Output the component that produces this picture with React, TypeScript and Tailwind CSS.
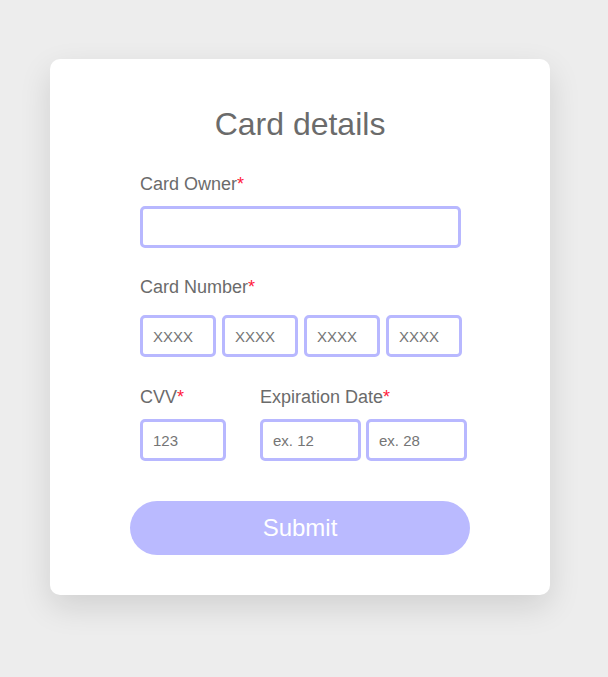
import { useState } from "react";

const inputCls =
	"h-[42px] rounded-[5px] border-[3px] border-[#b8b8ff] bg-white px-[10px] text-[15px] text-[#555] outline-none placeholder:text-[#757575]";

function Label({ text, className = "" }: { text: string; className?: string }) {
	return (
		<label className={`block text-[18px] leading-[20px] text-[#6b6b6b] ${className}`}>
			{text}
			<span className="text-[#ff1a3c]">*</span>
		</label>
	);
}

export default function App() {
	const [owner, setOwner] = useState("");

	return (
		<div
			className="min-h-[677px] w-full bg-[#ededed] pl-[50px] pt-[59px]"
			style={{ fontFamily: '"Liberation Sans", Arial, sans-serif' }}>
			<form
				onSubmit={(e) => e.preventDefault()}
				className="flex w-[500px] flex-col rounded-[10px] bg-white pb-[40px] pt-[47px] shadow-[0_12px_32px_rgba(0,0,0,0.12)]">
				<h1 className="text-center text-[32px] leading-[37px] text-[#6b6b6b]">Card details</h1>

				<div className="ml-[90px] w-[322px]">
					{/* OWNER */}
					<Label text="Card Owner" className="mt-[31px]" />
					<input
						value={owner}
						onChange={(e) => setOwner(e.target.value)}
						className={`${inputCls} mt-[12px] w-[321px]`}
					/>

					{/* NUMBER */}
					<Label text="Card Number" className="mt-[29px]" />
					<div className="mt-[18px] flex gap-[6px]">
						<input placeholder="XXXX" className={`${inputCls} w-[76px]`} />
						<input placeholder="XXXX" className={`${inputCls} w-[76px]`} />
						<input placeholder="XXXX" className={`${inputCls} w-[76px]`} />
						<input placeholder="XXXX" className={`${inputCls} w-[76px]`} />
					</div>

					{/* CVV + EXPIRATION */}
					<div className="mt-[30px] flex gap-[34px]">
						<div>
							<Label text="CVV" />
							<input placeholder="123" className={`${inputCls} mt-[12px] w-[86px]`} />
						</div>
						<div>
							<Label text="Expiration Date" />
							<div className="mt-[12px] flex gap-[5px]">
								<input placeholder="ex. 12" className={`${inputCls} w-[101px]`} />
								<input placeholder="ex. 28" className={`${inputCls} w-[101px]`} />
							</div>
						</div>
					</div>
				</div>

				<button
					type="submit"
					className="ml-[80px] mt-[40px] h-[54px] w-[340px] rounded-full bg-[#babaff] text-[24px] text-white">
					Submit
				</button>
			</form>
		</div>
	);
}
